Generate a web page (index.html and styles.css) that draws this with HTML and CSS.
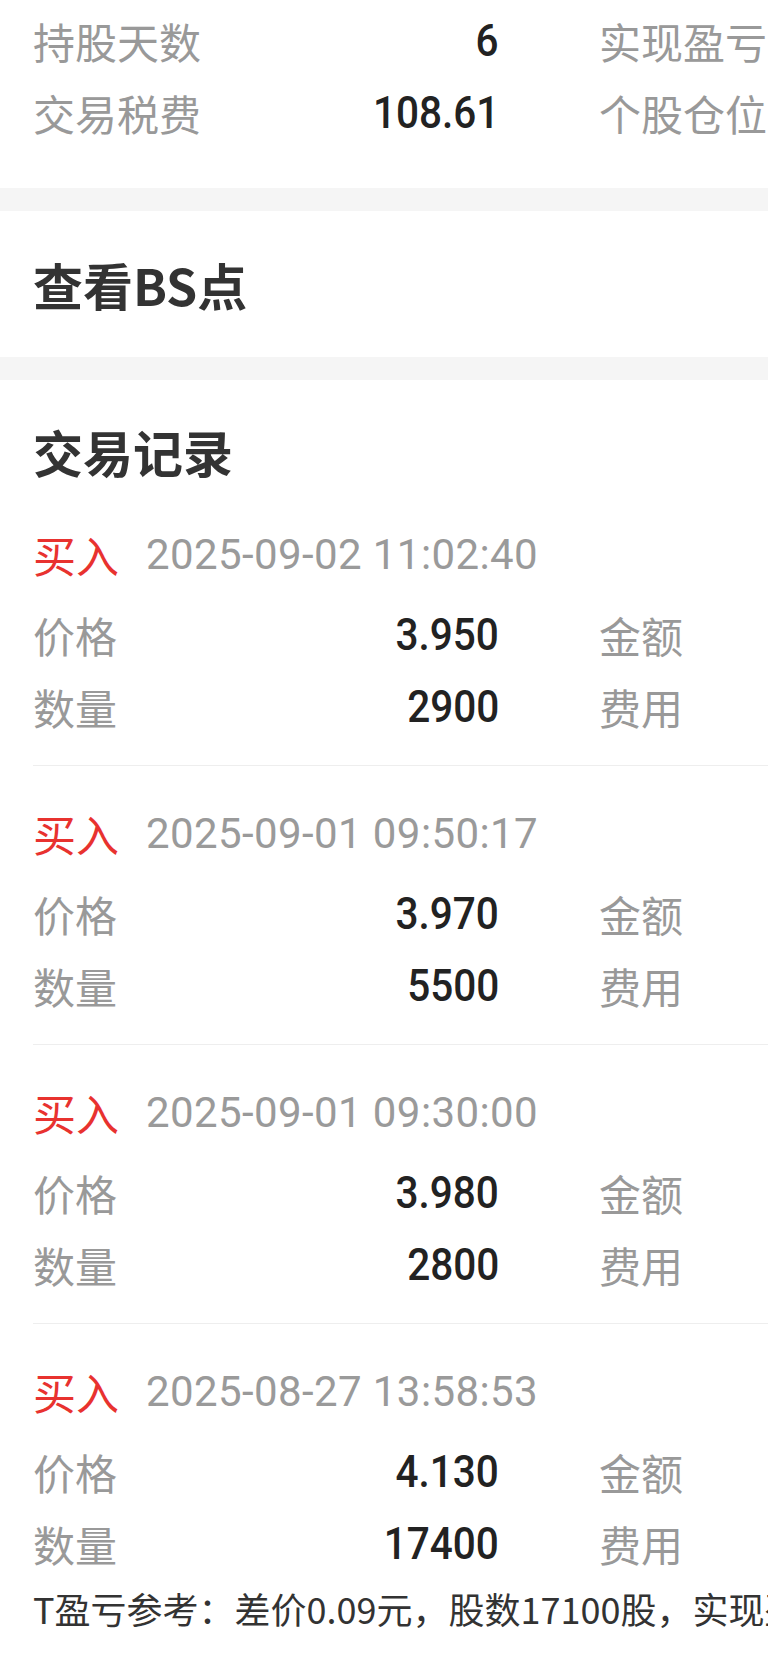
FILE: index.html
```html
<!DOCTYPE html>
<html lang="zh-CN">
<head>
<meta charset="utf-8">
<title>交易记录</title>
<link rel="stylesheet" href="styles.css">
</head>
<body>
<div class="page">
  <section class="card stats">
    <div class="grid">
      <div class="cell"><span class="label">持股天数</span><span class="num">6</span></div>
      <div class="cell"><span class="label">实现盈亏</span></div>
      <div class="cell"><span class="label">交易税费</span><span class="num">108.61</span></div>
      <div class="cell"><span class="label">个股仓位</span></div>
    </div>
  </section>
  <div class="band"></div>
  <section class="card bs">
    <h2 class="title">查看BS点</h2>
  </section>
  <div class="band"></div>
  <section class="card records">
    <h2 class="title records-title">交易记录</h2>

    <div class="record">
      <div class="rec-head"><span class="side">买入</span><span class="time">2025-09-02 11:02:40</span></div>
      <div class="grid">
        <div class="cell"><span class="label">价格</span><span class="num">3.950</span></div>
        <div class="cell"><span class="label">金额</span></div>
        <div class="cell"><span class="label">数量</span><span class="num">2900</span></div>
        <div class="cell"><span class="label">费用</span></div>
      </div>
    </div>

    <div class="record">
      <div class="rec-head"><span class="side">买入</span><span class="time">2025-09-01 09:50:17</span></div>
      <div class="grid">
        <div class="cell"><span class="label">价格</span><span class="num">3.970</span></div>
        <div class="cell"><span class="label">金额</span></div>
        <div class="cell"><span class="label">数量</span><span class="num">5500</span></div>
        <div class="cell"><span class="label">费用</span></div>
      </div>
    </div>

    <div class="record">
      <div class="rec-head"><span class="side">买入</span><span class="time">2025-09-01 09:30:00</span></div>
      <div class="grid">
        <div class="cell"><span class="label">价格</span><span class="num">3.980</span></div>
        <div class="cell"><span class="label">金额</span></div>
        <div class="cell"><span class="label">数量</span><span class="num">2800</span></div>
        <div class="cell"><span class="label">费用</span></div>
      </div>
    </div>

    <div class="record last">
      <div class="rec-head"><span class="side">买入</span><span class="time">2025-08-27 13:58:53</span></div>
      <div class="grid">
        <div class="cell"><span class="label">价格</span><span class="num">4.130</span></div>
        <div class="cell"><span class="label">金额</span></div>
        <div class="cell"><span class="label">数量</span><span class="num">17400</span></div>
        <div class="cell"><span class="label">费用</span></div>
      </div>
      <p class="tnote">T盈亏参考：差价0.09元，股数17100股，实现盈亏</p>
    </div>
  </section>
</div>
</body>
</html>
```

FILE: styles.css
```css
html, body {
  margin: 0;
  padding: 0;
  background: #ffffff;
  overflow: hidden;
}

body {
  font-family: "Noto Sans CJK SC", "Noto Sans", sans-serif;
  color: #333333;
}

.page {
  width: 768px;
  overflow: hidden;
}

.card {
  background: #ffffff;
  padding-left: 33px;
}

.band {
  height: 23px;
  background: #f5f5f5;
}

.stats {
  padding-top: 4px;
  padding-bottom: 40px;
}

.grid {
  display: grid;
  grid-template-columns: 466px 466px;
  column-gap: 100px;
  width: 1032px;
}

.cell {
  height: 72px;
  display: flex;
  align-items: center;
  justify-content: space-between;
}

.label {
  font-size: 42px;
  color: #999999;
  white-space: nowrap;
}

.num {
  display: inline-block;
  font-family: "Roboto", "Noto Sans", sans-serif;
  font-size: 45px;
  font-weight: 500;
  color: #222222;
  transform: scaleX(0.9);
  transform-origin: 100% 50%;
}

.title {
  margin: 0;
  font-size: 50px;
  font-weight: 700;
  color: #333333;
  line-height: 72px;
}

.bs {
  height: 146px;
  display: flex;
  align-items: center;
}

.records {
  padding-top: 35px;
}

.record {
  padding-top: 31px;
  padding-bottom: 23px;
  border-bottom: 1px solid #eeeeee;
}

.record.last {
  border-bottom: none;
  padding-bottom: 29px;
}

.rec-head {
  height: 72px;
  margin-bottom: 8px;
  display: flex;
  align-items: center;
  gap: 27px;
}

.side {
  font-size: 43px;
  color: #e8322f;
}

.time {
  font-family: "Roboto", "Noto Sans", sans-serif;
  font-size: 42px;
  letter-spacing: 0.4px;
  color: #9a9a9a;
}

.tnote {
  margin: 5px 0 0;
  font-size: 36px;
  line-height: 48px;
  color: #333333;
  white-space: nowrap;
}
```
